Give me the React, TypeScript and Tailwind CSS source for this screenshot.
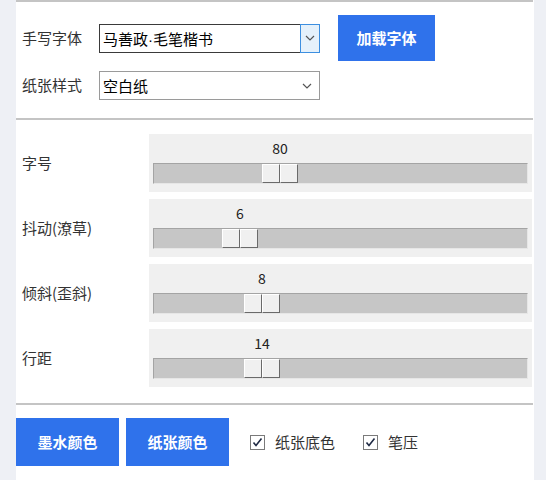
import React from "react";

const FONT = { fontFamily: '"Noto Sans CJK SC", "Noto Sans", sans-serif' };

function Chevron() {
  return (
    <svg width="10" height="6" viewBox="0 0 10 6">
      <path d="M1 1 L5 5 L9 1" fill="none" stroke="#555" strokeWidth="1.2" />
    </svg>
  );
}

function Slider({ label, value, left }: { label: string; value: string; left: number }) {
  return (
    <div className="flex items-center h-[58px]">
      <div className="w-[133px] pl-[6px] text-[15px] text-[#333]">{label}</div>
      <div className="w-[383px] h-[58px] bg-[#f0f0f0] px-[4px] flex flex-col">
        <div className="relative h-[29px]">
          <span
            className="absolute top-[5px] -translate-x-1/2 text-[14px] text-[#222] leading-[18px]"
            style={{ left: left + 18 }}
          >
            {value}
          </span>
        </div>
        <div className="relative h-[21px] bg-[#c6c6c6] border-t border-l border-[#a4a4a4] border-r-[#e6e6e6] border-b-[#e6e6e6] border-r border-b">
          <div
            className="absolute top-0 h-[19px] w-[36px] flex"
            style={{ left: left - 1 }}
          >
            <div className="w-[18px] h-full bg-[#f0f0f0] border-t border-l border-white border-r border-b border-r-[#6a6a6a] border-b-[#6a6a6a]" />
            <div className="w-[18px] h-full bg-[#f0f0f0] border-t border-l border-white border-r border-b border-r-[#6a6a6a] border-b-[#6a6a6a]" />
          </div>
        </div>
      </div>
    </div>
  );
}

function Check({ label }: { label: string }) {
  return (
    <div className="flex items-center gap-[10px]">
      <svg width="15" height="15" viewBox="0 0 15 15">
        <rect x="0.5" y="0.5" width="14" height="14" fill="#fff" stroke="#7a7a7a" />
        <path d="M3.5 7.5 L6 10.5 L11.5 3.5" fill="none" stroke="#1f2a44" strokeWidth="1.6" />
      </svg>
      <span className="text-[15px] text-[#333]">{label}</span>
    </div>
  );
}

export default function App() {
  return (
    <div className="w-[546px] h-[480px] bg-[#eef0f5] flex" style={FONT}>
      <div className="ml-[16px] w-[518px] h-full bg-white flex flex-col">
        <div className="h-[2px] bg-[#c4c4c4] mr-[1px]" />
        <div className="mt-[13px] flex items-center h-[46px]">
          <div className="w-[83px] pl-[6px] text-[15px] text-[#333]">手写字体</div>
          <div className="w-[221px] h-[29px] flex border border-[#3a3a3a]">
            <div className="flex-1 pl-[3px] text-[15px] text-black leading-[27px]">
              马善政<span style={{ fontFamily: '"Liberation Sans", sans-serif' }}>·</span>毛笔楷书
            </div>
            <div className="w-[20px] -my-[1px] -mr-[1px] bg-[#e5f1fb] border border-[#3d8fe0] flex items-center justify-center">
              <Chevron />
            </div>
          </div>
          <button className="ml-[18px] w-[97px] h-[46px] bg-[#2f72eb] text-white text-[15px] font-bold">加载字体</button>
        </div>
        <div className="mt-[10px] flex items-center h-[29px]">
          <div className="w-[83px] pl-[6px] text-[15px] text-[#333]">纸张样式</div>
          <div className="w-[221px] h-[29px] flex items-center border border-[#9a9a9a]">
            <div className="flex-1 pl-[3px] text-[15px] text-black leading-[27px]">空白纸</div>
            <div className="w-[20px] flex items-center justify-center pr-[4px]">
              <Chevron />
            </div>
          </div>
        </div>
        <div className="mt-[18px] h-[2px] bg-[#c4c4c4] mr-[1px]" />
        <div className="mt-[14px] flex flex-col gap-[7px]">
          <Slider label="字号" value="80" left={109} />
          <Slider label="抖动(潦草)" value="6" left={69} />
          <Slider label="倾斜(歪斜)" value="8" left={91} />
          <Slider label="行距" value="14" left={91} />
        </div>
        <div className="mt-[16px] h-[2px] bg-[#c4c4c4] mr-[1px]" />
        <div className="mt-[13px] flex items-center">
          <button className="w-[103px] h-[48px] bg-[#2f72eb] text-white text-[15px] font-bold">墨水颜色</button>
          <button className="ml-[7px] w-[103px] h-[48px] bg-[#2f72eb] text-white text-[15px] font-bold">纸张颜色</button>
          <div className="ml-[21px]">
            <Check label="纸张底色" />
          </div>
          <div className="ml-[28px]">
            <Check label="笔压" />
          </div>
        </div>
      </div>
    </div>
  );
}
